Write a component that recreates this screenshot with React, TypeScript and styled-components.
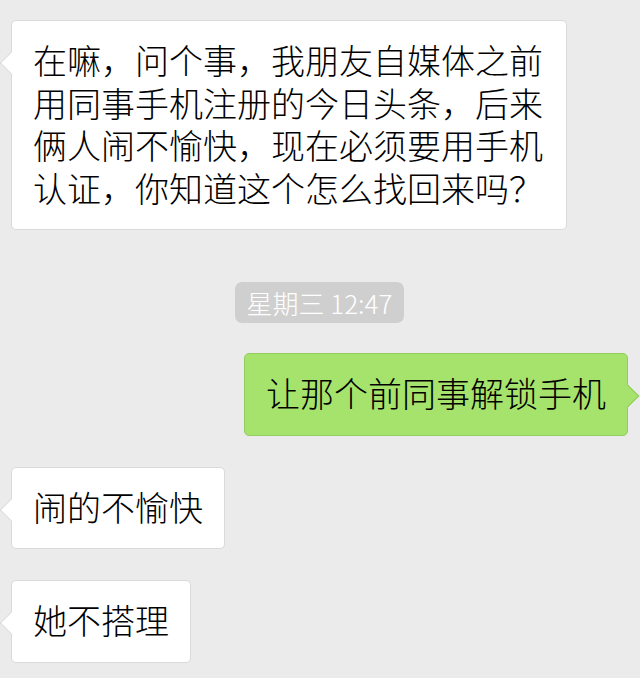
import React from 'react';
import styled, { createGlobalStyle, css } from 'styled-components';

type Side = 'left' | 'right';

type Message =
  | { kind: 'msg'; side: Side; text: string; wide?: boolean }
  | { kind: 'time'; text: string };

const messages: Message[] = [
  {
    kind: 'msg',
    side: 'left',
    wide: true,
    text: '在嘛，问个事，我朋友自媒体之前用同事手机注册的今日头条，后来俩人闹不愉快，现在必须要用手机认证，你知道这个怎么找回来吗？',
  },
  { kind: 'time', text: '星期三 12:47' },
  { kind: 'msg', side: 'right', text: '让那个前同事解锁手机' },
  { kind: 'msg', side: 'left', text: '闹的不愉快' },
  { kind: 'msg', side: 'left', text: '她不搭理' },
];

const App = () => {
  return (
    <>
      <GlobalStyle />
      <Chat>
        {messages.map((m, i) =>
          m.kind === 'time' ? (
            <TimeRow key={i}>
              <TimePill>{m.text}</TimePill>
            </TimeRow>
          ) : (
            <Row key={i} side={m.side}>
              <Bubble side={m.side}>
                <BubbleText wide={m.wide}>{m.text}</BubbleText>
              </Bubble>
            </Row>
          )
        )}
      </Chat>
    </>
  );
};

export default App;

const GlobalStyle = createGlobalStyle`
  html, body {
    margin: 0;
    padding: 0;
    background: #ebebeb;
  }
  body {
    font-family: "Noto Sans CJK SC", "Noto Sans", sans-serif;
  }
`;

const Chat = styled.div`
  display: flex;
  flex-direction: column;
  gap: 31px;
  padding: 20px 12px 20px 11px;
  min-height: 678px;
  box-sizing: border-box;
  background: #ebebeb;
`;

const Row = styled.div<{ side: Side }>`
  display: flex;
  justify-content: ${(p) => (p.side === 'right' ? 'flex-end' : 'flex-start')};
`;

const TimeRow = styled.div`
  display: flex;
  justify-content: center;
  margin-top: 21px;
  margin-bottom: -1px;
`;

const TimePill = styled.div`
  height: 41px;
  line-height: 41px;
  padding: 0 12px;
  border-radius: 7px;
  background: #cfcfcf;
  color: #fff;
  font-size: 26px;
  font-weight: 300;
`;

const leftBubble = css`
  background: #fff;
  border: 1px solid #dadada;

  &::before {
    left: -9px;
    background: #fff;
    border-left: 1px solid #dadada;
    border-bottom: 1px solid #dadada;
  }
`;

const rightBubble = css`
  background: #a6e36c;
  border: 1px solid #94cc5f;

  &::before {
    right: -9px;
    background: #a6e36c;
    border-right: 1px solid #94cc5f;
    border-top: 1px solid #94cc5f;
  }
`;

const Bubble = styled.div<{ side: Side }>`
  position: relative;
  border-radius: 5px;
  padding: 18px 21px 20px;
  color: #000;

  &::before {
    content: '';
    position: absolute;
    top: 34px;
    width: 15px;
    height: 15px;
    transform: rotate(45deg);
  }

  ${(p) => (p.side === 'right' ? rightBubble : leftBubble)}
`;

const BubbleText = styled.div<{ wide?: boolean }>`
  position: relative;
  font-size: 34px;
  font-weight: 300;
  line-height: 42.5px;
  max-width: ${(p) => (p.wide ? '512px' : 'none')};
  white-space: ${(p) => (p.wide ? 'normal' : 'nowrap')};
`;
